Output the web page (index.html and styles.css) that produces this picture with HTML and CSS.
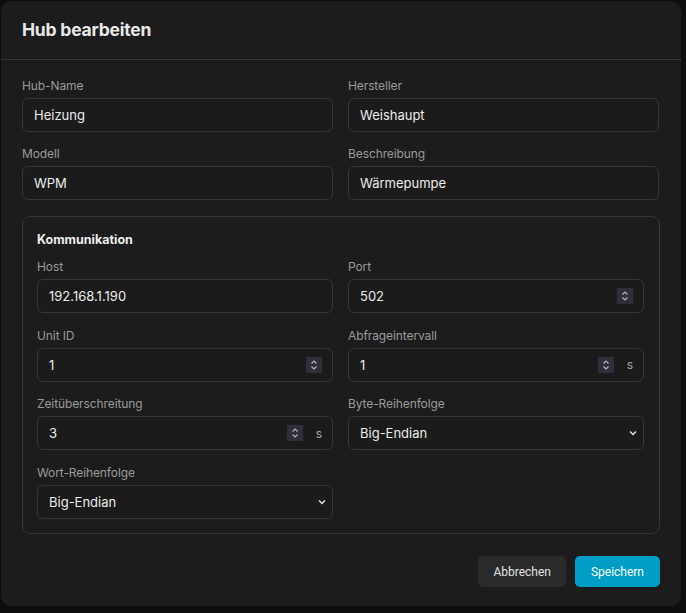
FILE: index.html
```html
<!DOCTYPE html>
<html lang="de">
<head>
<meta charset="utf-8">
<title>Hub bearbeiten</title>
<link rel="stylesheet" href="styles.css">
</head>
<body>
<div class="modal">
  <div class="modal-header"><h2 class="title">Hub bearbeiten</h2></div>
  <div class="modal-body">
    <div class="grid">
      <div class="field"><div class="label">Hub-Name</div><div class="input">Heizung</div></div>
      <div class="field"><div class="label">Hersteller</div><div class="input">Weishaupt</div></div>
      <div class="field"><div class="label">Modell</div><div class="input">WPM</div></div>
      <div class="field"><div class="label">Beschreibung</div><div class="input">Wärmepumpe</div></div>
    </div>
    <div class="section">
      <div class="section-title">Kommunikation</div>
      <div class="grid inner">
        <div class="field"><div class="label">Host</div><div class="input">192.168.1.190</div></div>
        <div class="field"><div class="label">Port</div><div class="input number"><span class="val">502</span><span class="spin"><svg width="8" height="12" viewBox="0 0 8 12"><path d="M1.5 4.5 L4 2 L6.5 4.5 M1.5 7.5 L4 10 L6.5 7.5" fill="none" stroke="#b4b4bc" stroke-width="1.2"/></svg></span></div></div>
        <div class="field"><div class="label">Unit ID</div><div class="input number"><span class="val">1</span><span class="spin"><svg width="8" height="12" viewBox="0 0 8 12"><path d="M1.5 4.5 L4 2 L6.5 4.5 M1.5 7.5 L4 10 L6.5 7.5" fill="none" stroke="#b4b4bc" stroke-width="1.2"/></svg></span></div></div>
        <div class="field"><div class="label">Abfrageintervall</div><div class="input number"><span class="val">1</span><span class="spin"><svg width="8" height="12" viewBox="0 0 8 12"><path d="M1.5 4.5 L4 2 L6.5 4.5 M1.5 7.5 L4 10 L6.5 7.5" fill="none" stroke="#b4b4bc" stroke-width="1.2"/></svg></span><span class="suffix">s</span></div></div>
        <div class="field"><div class="label">Zeitüberschreitung</div><div class="input number"><span class="val">3</span><span class="spin"><svg width="8" height="12" viewBox="0 0 8 12"><path d="M1.5 4.5 L4 2 L6.5 4.5 M1.5 7.5 L4 10 L6.5 7.5" fill="none" stroke="#b4b4bc" stroke-width="1.2"/></svg></span><span class="suffix">s</span></div></div>
        <div class="field"><div class="label">Byte-Reihenfolge</div><div class="input select"><span class="val">Big-Endian</span><svg class="chev" width="8" height="6" viewBox="0 0 8 6"><path d="M1 1.5 L4 4.5 L7 1.5" fill="none" stroke="#e0e0e0" stroke-width="1.5"/></svg></div></div>
        <div class="field"><div class="label">Wort-Reihenfolge</div><div class="input select"><span class="val">Big-Endian</span><svg class="chev" width="8" height="6" viewBox="0 0 8 6"><path d="M1 1.5 L4 4.5 L7 1.5" fill="none" stroke="#e0e0e0" stroke-width="1.5"/></svg></div></div>
      </div>
    </div>
    <div class="actions">
      <button class="btn btn-secondary">Abbrechen</button>
      <button class="btn btn-primary">Speichern</button>
    </div>
  </div>
</div>
</body>
</html>
```
FILE: styles.css
```css
* { box-sizing: border-box; }
html, body { margin: 0; padding: 0; }
body {
  background: #0e0e0e;
  font-family: Inter, "Noto Sans", sans-serif;
  color: #e6e6e6;
  width: 686px;
  height: 613px;
  overflow: hidden;
  padding: 1px 0 0 1px;
}
.modal {
  width: 680px;
  height: 605px;
  background: #1c1c1c;
  border-radius: 10px;
  display: flex;
  flex-direction: column;
}
.modal-header {
  height: 59px;
  border-bottom: 1px solid #383838;
  padding: 0 21px 2px 21px;
  display: flex;
  align-items: center;
}
.title {
  margin: 0;
  font-size: 17.5px;
  font-weight: 700;
  color: #e8e8e8;
  letter-spacing: -0.2px;
}
.modal-body {
  padding: 16px 21px 0 21px;
}
.grid {
  display: grid;
  grid-template-columns: 311px 311px;
  column-gap: 15px;
  row-gap: 12px;
}
.grid.inner {
  grid-template-columns: 296px 296px;
  column-gap: 15px;
  row-gap: 12.7px;
}
.field { display: flex; flex-direction: column; }
.label {
  font-size: 12px;
  line-height: 16px;
  color: #9a9a9a;
  padding-top: 2px;
  margin-bottom: 4px;
  letter-spacing: -0.1px;
}
.input {
  height: 34px;
  border: 1px solid #363636;
  border-radius: 6px;
  background: #1b1b1b;
  padding: 0 11px;
  font-size: 13px;
  color: #ebebeb;
  display: flex;
  align-items: center;
}
.input .val { flex: 1; }
.spin {
  width: 16px;
  height: 16px;
  background: #2f2e3a;
  display: flex;
  align-items: center;
  justify-content: center;
  margin-right: -1px;
}
.suffix {
  font-size: 12px;
  color: #a8a8a8;
  margin-left: 14px;
  margin-right: -1px;
}
.chev { margin-right: -5px; }
.section {
  margin-top: 16px;
  border: 1px solid #363636;
  border-radius: 8px;
  padding: 15px 14px 14px 14px;
}
.section-title {
  font-size: 12.5px;
  font-weight: 700;
  color: #ececec;
  line-height: 16px;
  margin-bottom: 9px;
}
.actions {
  margin-top: 22px;
  display: flex;
  justify-content: flex-end;
  gap: 9px;
}
.btn {
  height: 31px;
  border: none;
  border-radius: 5px;
  font-family: Roboto, Inter, sans-serif;
  font-size: 12px;
  cursor: pointer;
}
.btn-secondary { background: #2a2a2a; color: #e2e2e2; padding: 0 15px; }
.btn-primary { background: #009dc7; color: #ffffff; padding: 0 16px; }
```
